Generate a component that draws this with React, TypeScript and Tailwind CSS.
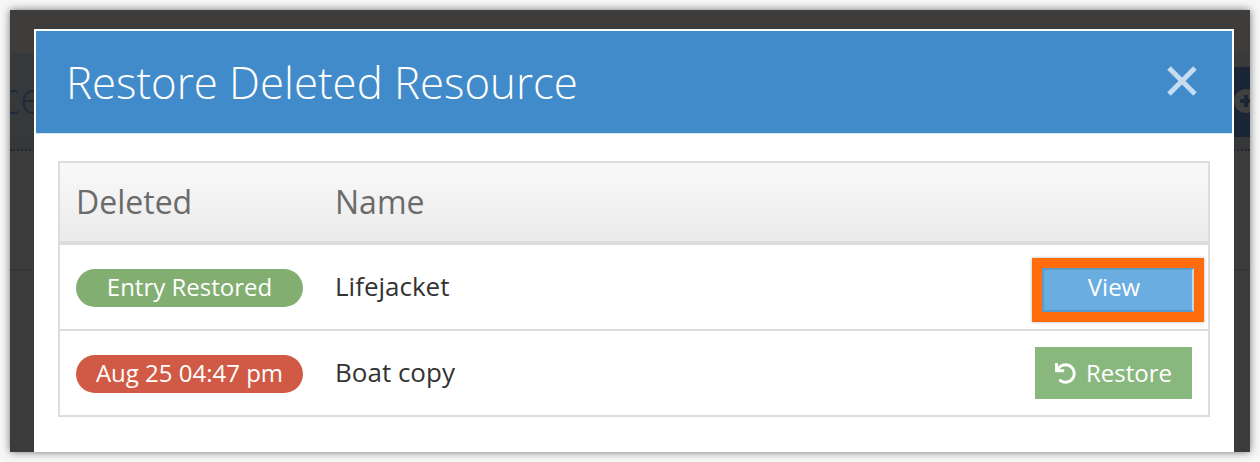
import { FaUndo } from 'react-icons/fa';

const font = "[font-family:'Open_Sans',sans-serif]";

function Backdrop() {
  return (
    <div className="flex h-full flex-col bg-[#3b3b3b]">
      <div className="h-[43px] shrink-0 bg-[#3e3d3c]" />
      <div className="flex h-[84px] shrink-0 bg-[#36393c]">
        <div className="flex-1 overflow-hidden">
          <div className="-ml-[11px] mt-[19px] text-[44px] leading-[50px] font-light text-[#1c2a3a]">ce</div>
        </div>
        <div className="flex w-[16px] shrink-0 flex-col bg-[#3a3a3a]">
          <div className="mt-[14px] h-[70px] overflow-hidden bg-[#1a2633]">
            <div className="mt-[22px] flex h-[24px] w-[24px] items-center justify-center rounded-full bg-[#404040]">
              <svg width="14" height="14" viewBox="0 0 14 14" className="text-[#1a2633]">
                <path d="M7 1v12M1 7h12" stroke="currentColor" strokeWidth="4" />
              </svg>
            </div>
          </div>
        </div>
      </div>
      <div className="h-[12px] shrink-0 bg-[#363738]" />
      <div className="h-[2px] shrink-0 border-t-2 border-dotted border-[#23272d]" />
      <div className="h-[118px] shrink-0 bg-[#3c3c3c]" />
      <div className="h-px shrink-0 border-t border-dotted border-[#1c2a3a]" />
    </div>
  );
}

function Badge({ color, children }: { color: string; children: string }) {
  return (
    <span className={`mt-[2px] flex h-[38px] w-[227px] items-center justify-center rounded-[19px] pb-[2px] text-[24px] text-white ${color}`}>
      {children}
    </span>
  );
}

export default function App() {
  return (
    <div className={`h-[462px] w-[1260px] overflow-hidden bg-[#f7f7f7] p-[10px] ${font}`}>
      <div className="relative h-[442px] w-[1240px] overflow-hidden shadow-[0_0_8px_rgba(0,0,0,0.55)]">
        <Backdrop />
        <div className="absolute left-[24px] top-[19px] flex h-[423px] w-[1200px] flex-col bg-white px-[2px] pt-[2px]">
          <div className="flex h-[103px] shrink-0 items-center justify-between border-b border-[#d9e6f1] bg-[#428bca] pl-[30px] pr-[34px]">
            <h1 className="text-[43.75px] leading-[52px] font-light text-white">Restore Deleted Resource</h1>
            <svg width="32" height="32" viewBox="0 0 32 32" className="mt-[-2px] text-[#c6dcf1]">
              <path d="M3 3l26 26M29 3L3 29" stroke="currentColor" strokeWidth="5" />
            </svg>
          </div>
          <div className="mx-[22px] mt-[27px] border-2 border-[#dddddd]">
            <div className="flex h-[82px] items-center border-b-4 border-[#dddddd] bg-gradient-to-b from-[#f9f9f9] to-[#ebebeb] text-[32px] text-[#6b6b6b]">
              <div className="w-[275px] pl-[16px]">Deleted</div>
              <div>Name</div>
            </div>
            <div className="flex h-[86px] items-center border-b-2 border-[#dddddd] text-[26px] text-[#333333]">
              <div className="w-[275px] pl-[16px]">
                <Badge color="bg-[#82ae71]">Entry Restored</Badge>
              </div>
              <div className="flex-1 pb-[2px]">Lifejacket</div>
              <div className="mr-[4px] mt-[6px] border-[10px] border-[#ff6c0c] shadow-[0_0_3px_rgba(0,0,0,0.3)]">
                <button className="flex h-[44px] w-[152px] items-center justify-center border-2 border-[#5b9bcb] border-r-[#c4d6e2] bg-[#6aade0] pb-[6px] pr-[8px] text-[24px] text-white">
                  View
                </button>
              </div>
            </div>
            <div className="flex h-[84px] items-center text-[26px] text-[#333333]">
              <div className="w-[275px] pl-[16px]">
                <Badge color="bg-[#d15a46]">Aug 25 04:47 pm</Badge>
              </div>
              <div className="flex-1 pb-[2px]">Boat copy</div>
              <button className="mr-[16px] flex h-[52px] w-[157px] items-center justify-center gap-[10px] bg-[#89b87f] text-[24px] text-white">
                <FaUndo className="h-[21px] w-[21px]" />
                Restore
              </button>
            </div>
          </div>
        </div>
      </div>
    </div>
  );
}
